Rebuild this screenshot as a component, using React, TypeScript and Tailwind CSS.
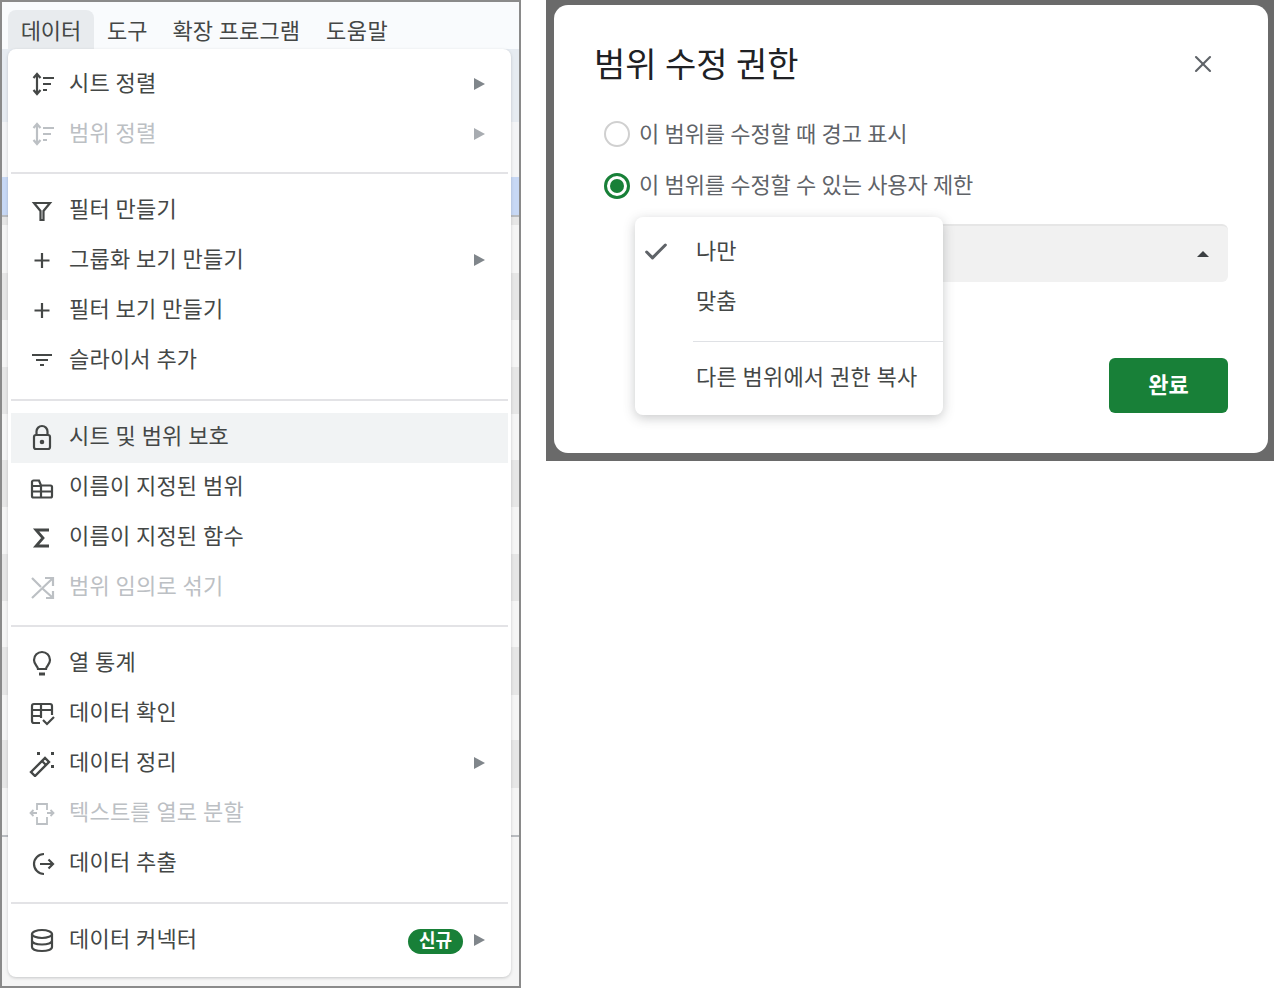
import type { ReactNode } from 'react';
import { Check, X } from 'lucide-react';

const font = 'font-["Roboto","Noto_Sans_CJK_KR",sans-serif]';

// edge colours of the spreadsheet behind the menu, top to bottom
const sheetBands = [
  { h: 46, color: '#f9fbfd' },
  { h: 74, color: '#e6ebf1' },
  { h: 55, color: '#f3f4f6' },
  { h: 38, color: '#c7d8f5' },
  { h: 2, color: '#b9bcc0' },
  { h: 8, color: '#e6e6e6' },
  { h: 48, color: '#f5f5f5' },
  { h: 47, color: '#e6e6e6' },
  { h: 47, color: '#f5f5f5' },
  { h: 47, color: '#e6e6e6' },
  { h: 46, color: '#f5f5f5' },
  { h: 47, color: '#e6e6e6' },
  { h: 47, color: '#f5f5f5' },
  { h: 47, color: '#e6e6e6' },
  { h: 46, color: '#f5f5f5' },
  { h: 48, color: '#e6e6e6' },
  { h: 45, color: '#f5f5f5' },
  { h: 48, color: '#e6e6e6' },
  { h: 47, color: '#f5f5f5' },
  { h: 2, color: '#b9bcc0' },
  { h: 151, color: '#f5f5f5' },
];

function Icon({ children }: { children: ReactNode }) {
  return (
    <svg
      viewBox="0 0 28 28"
      className="mb-0.5 h-7 w-7 shrink-0"
      fill="none"
      stroke="currentColor"
      strokeWidth={2.2}
    >
      {children}
    </svg>
  );
}

const SortIcon = (
  <Icon>
    <path d="M9 4v20M5.500 8 9 4l3.500 4M5.500 20 9 24l3.500-4" />
    <path d="M15 8h11M15 14h8M15 20h4" />
  </Icon>
);

const PlusIcon = (
  <Icon>
    <path d="M14 7v15M6.500 14.500h15" />
  </Icon>
);

interface RowProps {
  icon: ReactNode;
  label: string;
  disabled?: boolean;
  active?: boolean;
  arrow?: boolean;
  badge?: boolean;
}

function Row({ icon, label, disabled, active, arrow, badge }: RowProps) {
  return (
    <div
      className={`mx-[3px] flex h-[50px] items-center pl-[17px] pr-[23px] ${active ? 'bg-[#f1f3f4]' : ''} ${disabled ? 'text-[#bcc0c4]' : 'text-[#444746]'}`}
    >
      {icon}
      <span className="mb-[3px] ml-[13px] flex-1 text-[22px] leading-none tracking-[0.2px]">{label}</span>
      {badge && (
        <span className="mr-[11px] flex h-[25px] w-[55px] items-center justify-center rounded-full bg-[#188038] text-[18px] font-bold leading-none text-white">
          신규
        </span>
      )}
      {arrow && (
        <span
          className={`mb-0.5 h-0 w-0 border-y-[6px] border-l-[11px] border-y-transparent ${disabled ? 'border-l-[#a8acb1]' : 'border-l-[#80868b]'}`}
        />
      )}
    </div>
  );
}

function Divider() {
  return <div className="mx-[3px] mt-3 mb-3 h-0.5 bg-[#e3e3e6]" />;
}

function DataMenu() {
  return (
    <div className="absolute left-1.5 top-[47px] h-[928px] w-[503px] rounded-lg bg-white pt-[11px] shadow-[0_1px_3px_rgba(60,64,67,0.25)]">
      <Row icon={SortIcon} label="시트 정렬" arrow />
      <Row icon={SortIcon} label="범위 정렬" arrow disabled />
      <Divider />
      <Row
        label="필터 만들기"
        icon={
          <Icon>
            <path d="M6 7h16l-6.500 8v9h-3v-9z" />
          </Icon>
        }
      />
      <Row icon={PlusIcon} label="그룹화 보기 만들기" arrow />
      <Row icon={PlusIcon} label="필터 보기 만들기" />
      <Row
        label="슬라이서 추가"
        icon={
          <Icon>
            <path d="M4 9h20M8 14h12M12 19h4" />
          </Icon>
        }
      />
      <div className="mx-[3px] mb-3 mt-[13px] h-0.5 bg-[#e3e3e6]" />
      <Row
        active
        label="시트 및 범위 보호"
        icon={
          <Icon>
            <path d="M8.500 12V8.500a5.500 5.500 0 0 1 11 0V12" />
            <rect x="6" y="12" width="16" height="14" rx="2" />
            <circle cx="14" cy="19" r="1.200" fill="currentColor" />
          </Icon>
        }
      />
      <Row
        label="이름이 지정된 범위"
        icon={
          <Icon>
            <path d="M4 23V9a1.500 1.500 0 0 1 1.500-1.500H11l2 5h9.500A1.500 1.500 0 0 1 24 14v9a1.500 1.500 0 0 1-1.500 1.500h-17A1.500 1.500 0 0 1 4 23z" />
            <path d="M4 13h9M4 18.500h20M13 12.500v12" />
          </Icon>
        }
      />
      <Row
        label="이름이 지정된 함수"
        icon={
          <Icon>
            <path d="M21 7H8l7 8-7 8h13" strokeWidth={2.8} />
          </Icon>
        }
      />
      <Row
        disabled
        label="범위 임의로 섞기"
        icon={
          <Icon>
            <path d="m4 5 9 9M15 16l10 9M17 5h8v8M25 5 4 25M25 18v7h-7" />
          </Icon>
        }
      />
      <Divider />
      <Row
        label="열 통계"
        icon={
          <Icon>
            <path d="M10 20c0-3-4-4-4-9a8 8 0 0 1 16 0c0 5-4 6-4 9z" />
            <path d="M11 25h6" strokeWidth={3} />
          </Icon>
        }
      />
      <Row
        label="데이터 확인"
        icon={
          <Icon>
            <path d="M12 24H6a2 2 0 0 1-2-2V7a2 2 0 0 1 2-2h16a2 2 0 0 1 2 2v9" />
            <path d="M4 11h20M4 17h9M13 5v14M15 21l4 4 7-7" />
          </Icon>
        }
      />
      <Row
        label="데이터 정리"
        arrow
        icon={
          <Icon>
            <path d="M3 23 17 9l4 4L7 27z" strokeWidth={2.400} />
            <path d="m14 12 4 4" />
            <rect x="9" y="3" width="3" height="3" fill="currentColor" stroke="none" />
            <rect x="23" y="3" width="3" height="3" fill="currentColor" stroke="none" />
            <rect x="23" y="16" width="3" height="3" fill="currentColor" stroke="none" />
          </Icon>
        }
      />
      <Row
        disabled
        label="텍스트를 열로 분할"
        icon={
          <Icon>
            <path
              d="M9 11V5h10v6M9 18v7h10v-7M3 14h6M19 14h6M5.500 11 2.500 14l3 3M22.500 11l3 3-3 3"
              strokeWidth={1.800}
            />
          </Icon>
        }
      />
      <Row
        label="데이터 추출"
        icon={
          <Icon>
            <path d="M16 5a10 10 0 0 0 0 20" />
            <path d="M12 15h13M20.500 10.500 25 15l-4.500 4.500" />
          </Icon>
        }
      />
      <div className="mx-[3px] mb-3 mt-[13px] h-0.5 bg-[#e3e3e6]" />
      <Row
        label="데이터 커넥터"
        arrow
        badge
        icon={
          <Icon>
            <ellipse cx="14" cy="8" rx="10" ry="4" />
            <path d="M4 8v13c0 2.500 4.500 4 10 4s10-1.500 10-4V8M4 14.500c0 2.500 4.500 4 10 4s10-1.500 10-4" />
          </Icon>
        }
      />
    </div>
  );
}

function SheetBackdrop() {
  return (
    <div className="flex h-full flex-col">
      {sheetBands.map((band, i) => (
        <div key={i} style={{ height: band.h, backgroundColor: band.color }} className="shrink-0" />
      ))}
    </div>
  );
}

function Radio({ checked }: { checked?: boolean }) {
  return (
    <span
      className={`flex h-[26px] w-[26px] shrink-0 items-center justify-center rounded-full ${checked ? 'border-[3px] border-[#188038]' : 'border-2 border-[#d0d0d0]'}`}
    >
      {checked && <span className="h-3.5 w-3.5 rounded-full bg-[#188038]" />}
    </span>
  );
}

function PermissionDialog() {
  return (
    <div className="relative h-full rounded-[14px] bg-white pl-10 pr-10 pt-[37px]">
      <div className="flex items-start justify-between">
        <h2 className="text-[34px] font-normal leading-[46px] text-[#202124]">범위 수정 권한</h2>
        <X className="mr-[11px] mt-2 h-7 w-7 text-[#5f6368]" strokeWidth={1.8} />
      </div>
      <div className="ml-2.5 mt-[29px] flex h-[34px] items-center gap-[9px] text-[22px] leading-none tracking-[-0.1px] text-[#5f6368]">
        <Radio />
        <span className="pt-0.5">이 범위를 수정할 때 경고 표시</span>
      </div>
      <div className="ml-2.5 mt-[18px] flex h-[34px] items-center gap-[9px] text-[22px] leading-none tracking-[-0.1px] text-[#5f6368]">
        <Radio checked />
        <span>이 범위를 수정할 수 있는 사용자 제한</span>
      </div>
      <div className="ml-[41px] mt-[21px] flex h-[58px] items-center justify-end rounded-md border-t-2 border-[#e6e6e6] bg-[#f1f1f1] pr-[19px]">
        <span className="h-0 w-0 border-x-[6px] border-b-[6px] border-x-transparent border-b-[#3c4043]" />
      </div>
      <div className="mt-[76px] flex justify-end">
        <button className="h-[55px] w-[119px] rounded-md bg-[#188038] text-[22px] font-bold leading-none text-white">
          완료
        </button>
      </div>

      <div className="absolute left-[81px] top-[212px] w-[308px] rounded-lg bg-white pb-0.5 pt-2.5 text-[22px] text-[#444746] shadow-[0_3px_12px_rgba(60,64,67,0.28)]">
        <div className="relative flex h-[50px] items-center pl-[61px]">
          <Check className="absolute left-[7px] h-7 w-7 text-[#5f6368]" strokeWidth={2.6} />
          <span className="leading-none">나만</span>
        </div>
        <div className="flex h-[50px] items-center pl-[61px]">
          <span className="leading-none">맞춤</span>
        </div>
        <div className="ml-[58px] mt-3.5 h-px bg-[#dfe1e5]" />
        <div className="flex h-[71px] items-center pl-[61px]">
          <span className="leading-none tracking-[0.2px]">다른 범위에서 권한 복사</span>
        </div>
      </div>
    </div>
  );
}

export default function App() {
  return (
    <div className={`flex h-[988px] w-[1274px] items-start bg-white ${font}`}>
      <div className="relative h-[988px] w-[521px] shrink-0 overflow-hidden border-2 border-[#8a8a8a]">
        <SheetBackdrop />
        <div className="absolute left-0 right-0 top-0 flex h-[47px] items-end bg-[#f9fbfd] pl-1.5 text-[22px] leading-none text-[#444746]">
          <span className="flex h-[39px] w-[86px] items-center justify-center rounded-t-lg bg-[#e8ebee] pt-[5px]">데이터</span>
          <span className="ml-[13px] pb-1.5">도구</span>
          <span className="ml-[25px] pb-1.5 tracking-[0.1px]">확장 프로그램</span>
          <span className="ml-[26px] pb-1.5 tracking-[0.5px]">도움말</span>
        </div>
        <DataMenu />
      </div>
      <div className="ml-[25px] h-[461px] w-[728px] bg-[#6a6a6a] pb-2 pl-2 pr-[6px] pt-[5px]">
        <PermissionDialog />
      </div>
    </div>
  );
}
